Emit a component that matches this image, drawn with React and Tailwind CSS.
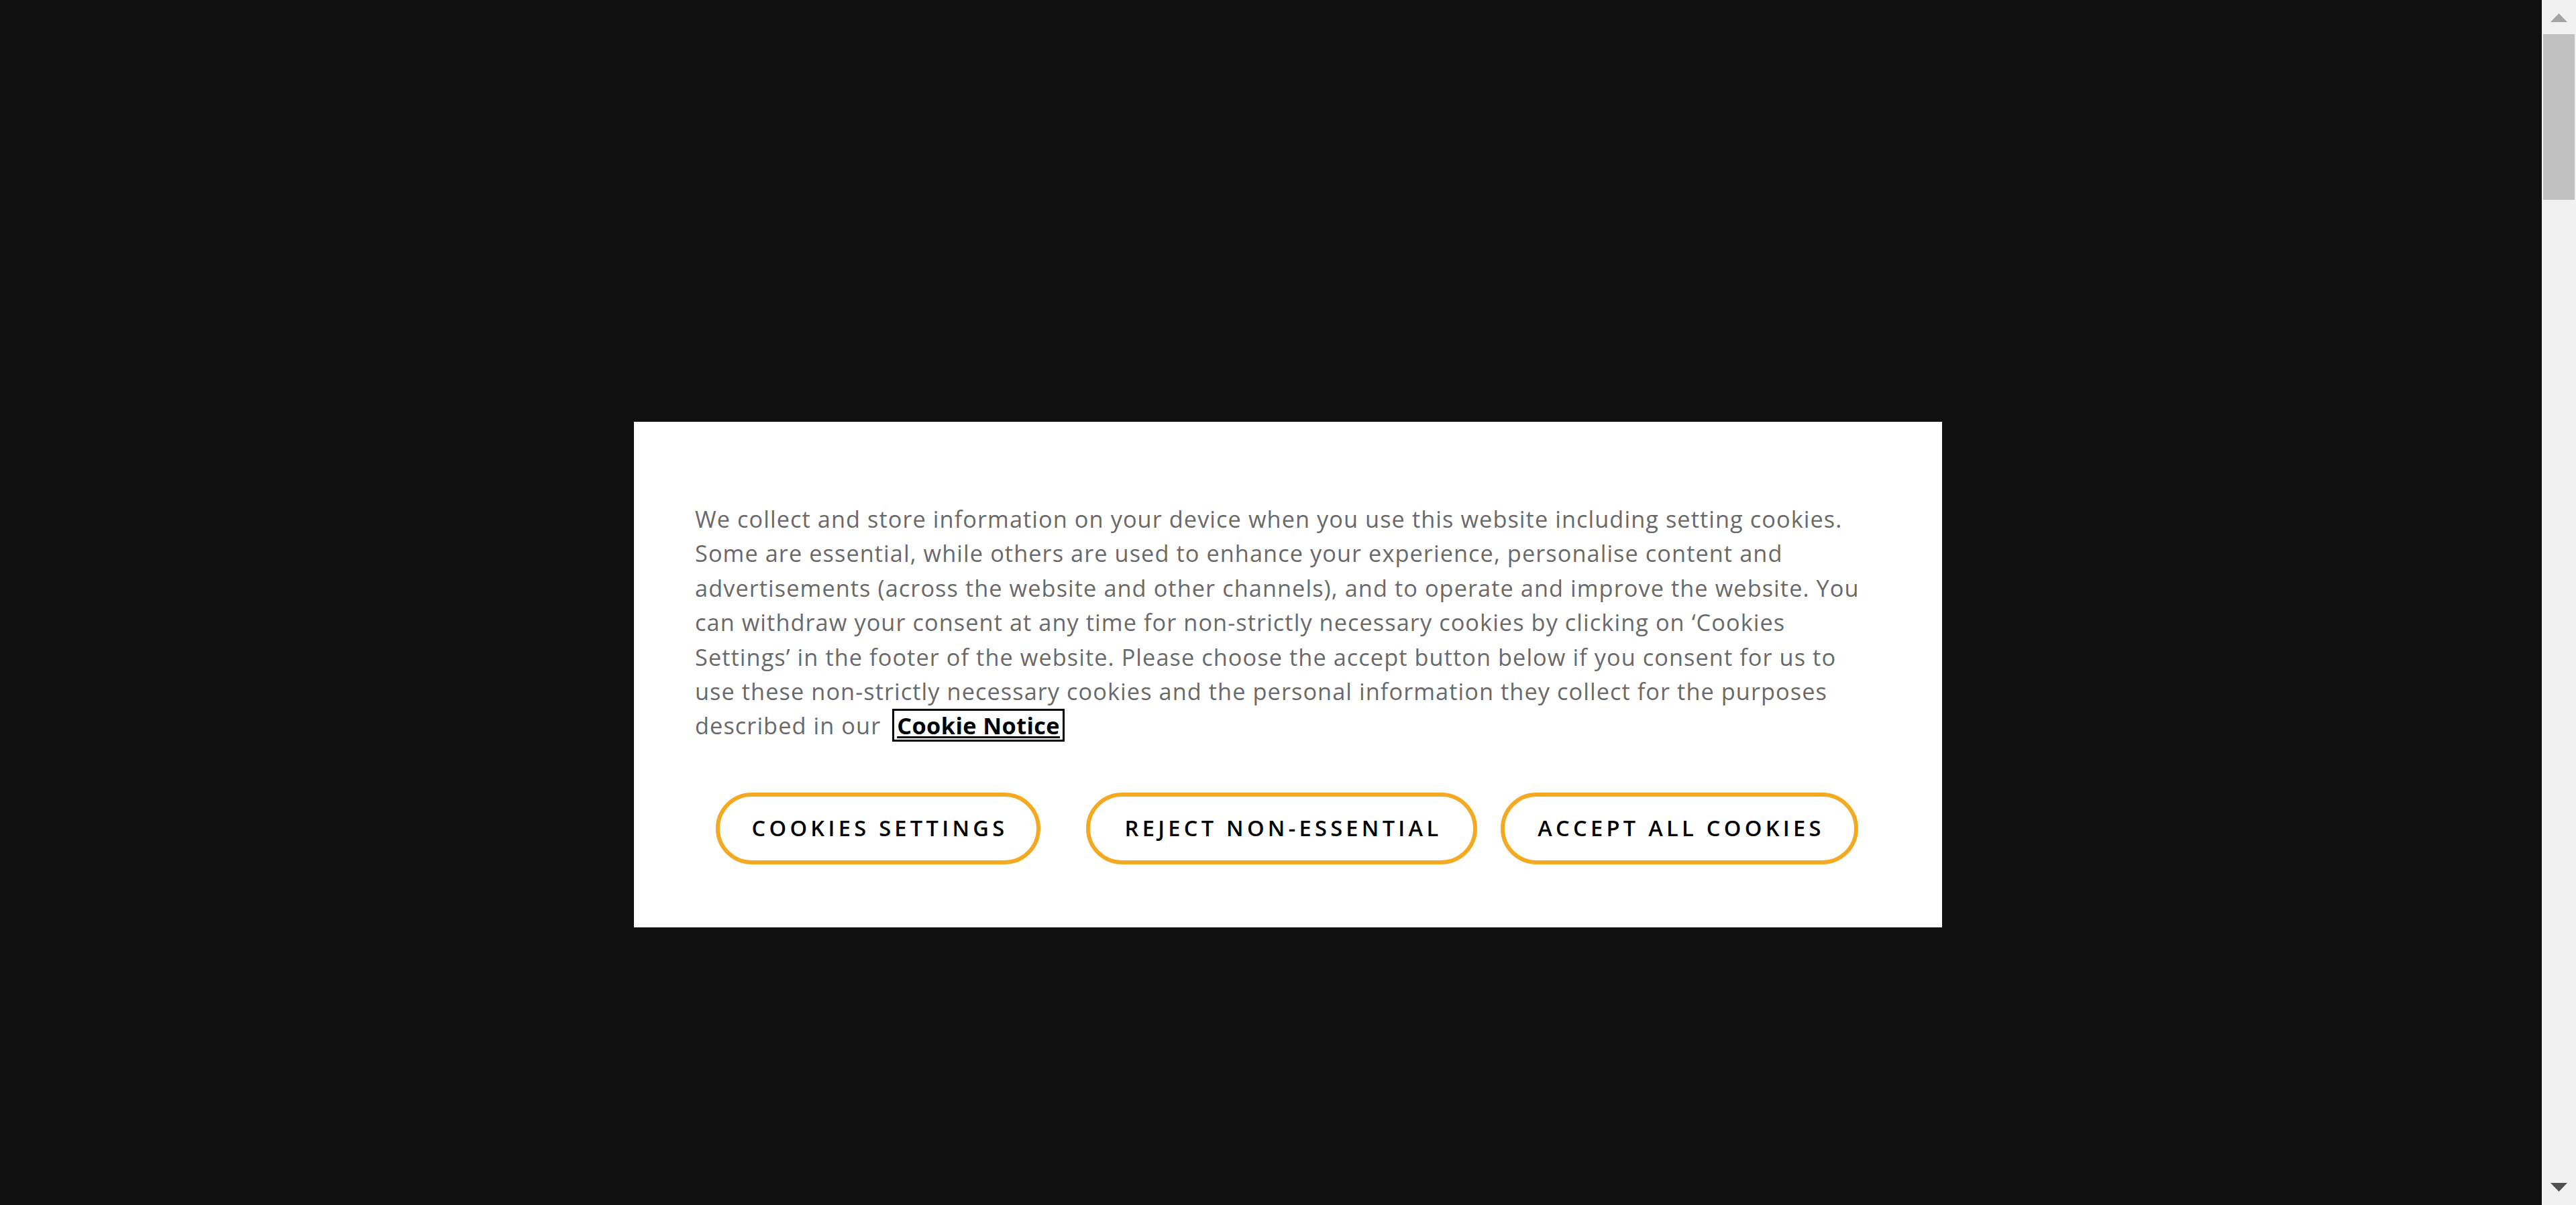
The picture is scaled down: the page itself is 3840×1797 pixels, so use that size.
import React from "react";

const lines = [
  "We collect and store information on your device when you use this website including setting cookies.",
  "Some are essential, while others are used to enhance your experience, personalise content and",
  "advertisements (across the website and other channels), and to operate and improve the website. You",
  "can withdraw your consent at any time for non-strictly necessary cookies by clicking on \u2018Cookies",
  "Settings\u2019 in the footer of the website. Please choose the accept button below if you consent for us to",
  "use these non-strictly necessary cookies and the personal information they collect for the purposes",
];

function Btn({ w, children, className = "" }) {
  return (
    <button
      className={
        "h-[107px] shrink-0 rounded-full border-[6px] border-[#f4a921] bg-white text-black uppercase text-[32.6px] font-semibold tracking-[5.3px] pl-[5px] flex items-center justify-center " +
        className
      }
      style={{ width: w }}
    >
      {children}
    </button>
  );
}

export default function App() {
  return (
    <div
      className="w-[3840px] h-[1797px] flex overflow-hidden bg-[#101010]"
      style={{ fontFamily: '"Open Sans", "Noto Sans", sans-serif' }}
    >
      <div className="flex-1 bg-[#101010] pt-[629px]">
        <div className="ml-[945px] w-[1950px] h-[754px] bg-white pl-[91px] pt-[119px]">
          <p className="text-[34.3px] leading-[51.4px] tracking-[1.07px] text-[#696969] whitespace-nowrap">
            {lines.map((l, i) => (
              <React.Fragment key={i}>
                {l}
                <br />
              </React.Fragment>
            ))}
            described in our{" "}
            <a className="ml-[7px] inline-block border-[3px] border-black px-[4px] leading-[43px] font-bold tracking-[0.4px] text-black underline decoration-[3px] underline-offset-[3px]">
              Cookie Notice
            </a>
          </p>
          <div className="flex mt-[74px]">
            <Btn w={484} className="ml-[31px]">Cookies Settings</Btn>
            <Btn w={583} className="ml-[68px]">Reject Non-Essential</Btn>
            <Btn w={533} className="ml-[35px]">Accept All Cookies</Btn>
          </div>
        </div>
      </div>
      <div className="w-[51px] h-full bg-[#f1f1f1] flex flex-col">
        <div className="h-[51px] flex items-center justify-center pt-[1px]">
          <svg width="25" height="13" viewBox="0 0 25 13">
            <polygon points="12.5,0 25,13 0,13" fill="#a3a3a3" />
          </svg>
        </div>
        <div className="mx-[2px] h-[247px] bg-[#c1c1c1]" />
        <div className="flex-1" />
        <div className="h-[51px] flex items-center justify-center pb-[2px]">
          <svg width="25" height="13" viewBox="0 0 25 13">
            <polygon points="0,0 25,0 12.5,13" fill="#505050" />
          </svg>
        </div>
      </div>
    </div>
  );
}
